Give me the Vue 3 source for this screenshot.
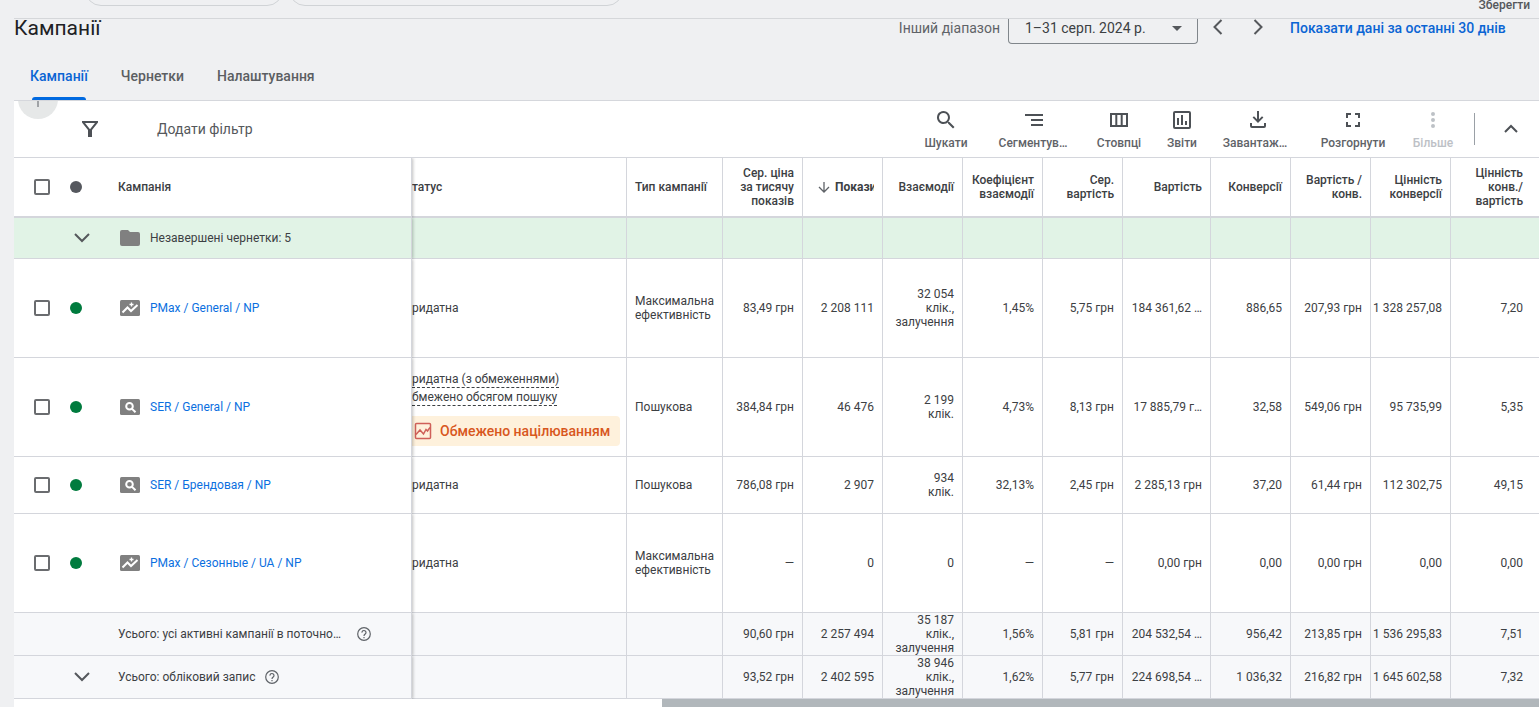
<template>
  <div class="page">
    <div class="strip">
      <button class="pill pill-small" aria-label="Перегляд"></button>
      <button class="pill pill-large" aria-label="Фільтри кампаній"></button>
      <button class="save">Зберегти</button>
    </div>

    <header class="head">
      <h1>Кампанії</h1>
      <span class="range-label">Інший діапазон</span>
      <button class="range">
        1–31 серп. 2024 р.
        <svg width="10" height="5" viewBox="0 0 10 5"><path d="M0 0h10L5 5z" fill="#55585c" /></svg>
      </button>
      <button class="step" aria-label="Назад">
        <svg width="10" height="16" viewBox="0 0 10 16"><path d="M8.500 1L1.500 8l7 7" /></svg>
      </button>
      <button class="step" aria-label="Вперед">
        <svg width="10" height="16" viewBox="0 0 10 16"><path d="M1.500 1l7 7-7 7" /></svg>
      </button>
      <a class="last-days" href="#">Показати дані за останні 30 днів</a>
    </header>

    <nav class="tabs">
      <a href="#" class="tab active">Кампанії</a>
      <a href="#" class="tab">Чернетки</a>
      <a href="#" class="tab">Налаштування</a>
    </nav>

    <main>
      <div class="toolbar">
        <button class="add" aria-label="Створити"></button>
        <svg class="funnel" width="18" height="18" viewBox="0 0 18 18">
          <path d="M1 1h16v1.500L11 10v7H7v-7L1 2.500zM4 3l5 6.200L14 3z" fill="#4d5156" fill-rule="evenodd" />
        </svg>
        <button class="add-filter">Додати фільтр</button>
        <div class="tools">
          <button v-for="tool in tools" :key="tool.name" class="tool" :class="tool.name" :disabled="tool.name === 'more'">
            <svg width="24" height="24" viewBox="0 0 24 24"><path :d="tool.icon" /></svg>
            <span>{{ tool.label }}</span>
          </button>
        </div>
        <button class="collapse" aria-label="Згорнути">
          <svg width="14" height="9" viewBox="0 0 14 9"><path d="M1 8l6-6 6 6" fill="none" stroke="#4d5156" stroke-width="2" /></svg>
        </button>
      </div>

      <table>
        <colgroup>
          <col />
          <col class="w-status" />
          <col class="w-type" />
          <col v-for="n in 5" :key="n" class="w-num" />
          <col class="w-wide" />
          <col v-for="n in 3" :key="'c' + n" class="w-num" />
          <col class="w-wide" />
        </colgroup>
        <thead>
          <tr>
            <th class="first">
              <div class="lead">
                <input type="checkbox" aria-label="Вибрати всі кампанії" />
                <i class="dot dark"></i>
                <span>Кампанія</span>
              </div>
            </th>
            <th class="status">татус</th>
            <th class="type">Тип кампанії</th>
            <th>{{ headings[0] }}</th>
            <th class="sorted">
              <div class="sort">
                <svg width="12" height="12" viewBox="0 0 12 12"><path d="M6 1v10M1 6l5 5 5-5" fill="none" stroke="#5f6368" stroke-width="1.300" /></svg>
                <span>Покази</span>
              </div>
            </th>
            <th v-for="heading in headings.slice(1)" :key="heading">{{ heading }}</th>
          </tr>
        </thead>
        <tbody>
          <tr class="drafts">
            <td class="first">
              <div class="lead">
                <i></i>
                <button class="chevron" aria-label="Розгорнути чернетки">
                  <svg width="16" height="10" viewBox="0 0 16 10"><path d="M1 1l7 7 7-7" /></svg>
                </button>
                <span class="name">
                  <svg width="20" height="16" viewBox="0 0 20 16"><path d="M2 0h6l2 2h8a2 2 0 0 1 2 2v10a2 2 0 0 1-2 2H2a2 2 0 0 1-2-2V2a2 2 0 0 1 2-2z" fill="#808080" /></svg>
                  Незавершені чернетки: 5
                </span>
              </div>
            </td>
            <td v-for="n in 12" :key="n"></td>
          </tr>
          <tr v-for="row in campaigns" :key="row.name" :class="row.size">
            <td class="first">
              <div class="lead">
                <input type="checkbox" :aria-label="row.name" />
                <i class="dot"></i>
                <span class="name">
                  <svg width="20" height="16" viewBox="0 0 20 16">
                    <rect width="20" height="16" rx="1.500" fill="#808080" />
                    <g v-if="row.pmax" fill="none" stroke="#fff">
                      <path d="M2.500 12.500L7.500 7.500l3.500 3.500 6.500-6" stroke-width="2" />
                      <path d="M11.500 2.500v4M9.500 4.500h4" stroke-width="1.300" />
                    </g>
                    <g v-else fill="none" stroke="#fff" stroke-width="2">
                      <circle cx="9.500" cy="7.300" r="3.300" />
                      <path d="M11.800 9.600l3.700 3.700" />
                    </g>
                  </svg>
                  <a href="#">{{ row.name }}</a>
                </span>
              </div>
            </td>
            <td class="status">
              <template v-if="row.limited">
                <div class="reason"><span>ридатна (з обмеженнями)</span></div>
                <div class="reason"><span>бмежено обсягом пошуку</span></div>
                <button class="badge">
                  <svg width="18" height="18" viewBox="0 0 18 18" fill="none" stroke="#cf6059" stroke-width="1.500">
                    <rect x="1.500" y="1.500" width="15" height="15" rx="1" />
                    <path d="M2 12.500l4-4.500 3.500 4 2.500-4.500 1.500 1.500L16 5.500" />
                  </svg>
                  Обмежено націлюванням
                </button>
              </template>
              <template v-else>ридатна</template>
            </td>
            <td class="type">{{ row.type }}</td>
            <td v-for="(value, i) in row.values" :key="i">{{ value }}</td>
          </tr>
          <tr v-for="row in totals" :key="row.name" class="total">
            <td class="first">
              <div class="lead">
                <i></i>
                <button v-if="row.expandable" class="chevron" aria-label="Розгорнути підсумки">
                  <svg width="16" height="10" viewBox="0 0 16 10"><path d="M1 1l7 7 7-7" /></svg>
                </button>
                <i v-else></i>
                <span class="total-name" :class="{ cut: !row.expandable }">
                  {{ row.name }}
                  <svg width="14" height="14" viewBox="0 0 14 14" fill="none" stroke="#5f6368" stroke-width="1.200">
                    <circle cx="7" cy="7" r="6.300" />
                    <path d="M5 5.600a2 2 0 1 1 3.200 1.500C7.400 7.700 7 8 7 8.900M7 9.900v1.300" />
                  </svg>
                </span>
              </div>
            </td>
            <td></td>
            <td></td>
            <td v-for="(value, i) in row.values" :key="i">{{ value }}</td>
          </tr>
        </tbody>
      </table>
      <div class="scroll"><div class="thumb"></div></div>
    </main>
  </div>
</template>

<script setup>
const tools = [
  { name: 'search', label: 'Шукати', icon: 'M15.500 14h-.8l-.3-.3a6.500 6.500 0 1 0-.7.7l.3.3v.8l5 5 1.500-1.500zm-6 0a4.500 4.500 0 1 1 0-9 4.500 4.500 0 0 1 0 9z' },
  { name: 'segment', label: 'Сегментув…', icon: 'M4 6h18v2H4zM10 11h12v2H10zM10 16h12v2H10z' },
  { name: 'columns', label: 'Стовпці', icon: 'M3 5v14h18V5zm2 2h3.300v10H5zm5.300 0h3.400v10h-3.400zm5.400 0H19v10h-3.300z' },
  { name: 'reports', label: 'Звіти', icon: 'M5 3a2 2 0 0 0-2 2v14a2 2 0 0 0 2 2h14a2 2 0 0 0 2-2V5a2 2 0 0 0-2-2zm0 2h14v14H5zM7 10h2v7H7zM11 7h2v10h-2zM15 13h2v4h-2z' },
  { name: 'download', label: 'Завантаж…', icon: 'M14 3h2v8.200l3-3 1.400 1.400L15 15 9.600 9.600 11 8.200l3 3zM7 15h2v3h12v-3h2v3a2 2 0 0 1-2 2H9a2 2 0 0 1-2-2z' },
  { name: 'expand', label: 'Розгорнути', icon: 'M5 5h5v2H7v3H5zM14 5h5v5h-2V7h-3zM5 14h2v3h3v2H5zM17 14h2v5h-5v-2h3z' },
  { name: 'more', label: 'Більше', icon: 'M12 4a2 2 0 1 0 0 4 2 2 0 0 0 0-4zm0 6a2 2 0 1 0 0 4 2 2 0 0 0 0-4zm0 6a2 2 0 1 0 0 4 2 2 0 0 0 0-4z' },
]

const headings = [
  'Сер. ціна\nза тисячу\nпоказів',
  'Взаємодії',
  'Коефіцієнт\nвзаємодії',
  'Сер.\nвартість',
  'Вартість',
  'Конверсії',
  'Вартість /\nконв.',
  'Цінність\nконверсії',
  'Цінність\nконв./\nвартість',
]

const campaigns = [
  {
    name: 'PMax / General / NP',
    pmax: true,
    size: 'tall',
    type: 'Максимальна\nефективність',
    values: ['83,49 грн', '2 208 111', '32 054\nклік.,\nзалучення', '1,45%', '5,75 грн', '184 361,62 …', '886,65', '207,93 грн', '1 328 257,08', '7,20'],
  },
  {
    name: 'SER / General / NP',
    limited: true,
    size: 'tall',
    type: 'Пошукова',
    values: ['384,84 грн', '46 476', '2 199\nклік.', '4,73%', '8,13 грн', '17 885,79 г…', '32,58', '549,06 грн', '95 735,99', '5,35'],
  },
  {
    name: 'SER / Брендовая / NP',
    size: 'short',
    type: 'Пошукова',
    values: ['786,08 грн', '2 907', '934\nклік.', '32,13%', '2,45 грн', '2 285,13 грн', '37,20', '61,44 грн', '112 302,75', '49,15'],
  },
  {
    name: 'PMax / Сезонные / UA / NP',
    pmax: true,
    size: 'tall',
    type: 'Максимальна\nефективність',
    values: ['—', '0', '0', '—', '—', '0,00 грн', '0,00', '0,00 грн', '0,00', '0,00'],
  },
]

const totals = [
  {
    name: 'Усього: усі активні кампанії в поточно…',
    values: ['90,60 грн', '2 257 494', '35 187\nклік.,\nзалучення', '1,56%', '5,81 грн', '204 532,54 …', '956,42', '213,85 грн', '1 536 295,83', '7,51'],
  },
  {
    name: 'Усього: обліковий запис',
    expandable: true,
    values: ['93,52 грн', '2 402 595', '38 946\nклік.,\nзалучення', '1,62%', '5,77 грн', '224 698,54 …', '1 036,32', '216,82 грн', '1 645 602,58', '7,32'],
  },
]
</script>

<style>
body {
  background: #eff0f2;
}
</style>

<style scoped>
.page {
  padding-left: 14px;
  font-family: Roboto, Arial, sans-serif;
  font-size: 12px;
  color: #3c4043;
  overflow: hidden;
}

button {
  padding: 0;
  border: 0;
  background: none;
  font: inherit;
  color: inherit;
}

a {
  color: #0b6fe0;
  text-decoration: none;
}

svg {
  flex: none;
  display: block;
}

.strip {
  display: flex;
  align-items: flex-end;
  gap: 6px;
  height: 18px;
  padding-left: 71px;
  border-bottom: 1px solid #d5d7da;
  overflow: hidden;
}

.pill {
  height: 32px;
  margin-bottom: 12px;
  border: 1px solid #d0d3d6;
  border-radius: 16px;
}

.pill-small {
  width: 198px;
}

.pill-large {
  width: 334px;
}

.save {
  margin: 0 9px 5px auto;
  line-height: 16px;
  font-weight: 500;
  color: #55585c;
}

.head {
  display: flex;
  height: 34px;
  padding-right: 28px;
  overflow: hidden;
  line-height: 18px;
  font-size: 14px;
}

h1 {
  margin: 0 auto 0 0;
  font-size: 21px;
  font-weight: 400;
  line-height: 18px;
  color: #202124;
}

.range-label {
  margin-right: 8px;
  color: #5f6368;
}

.range {
  display: flex;
  justify-content: space-between;
  width: 190px;
  height: 25px;
  padding: 0 15px 6px 16px;
  box-sizing: border-box;
  border: 1px solid #80868b;
  border-top: 0;
  border-radius: 0 0 4px 4px;
  align-items: center;
}

.step {
  display: flex;
  width: 40px;
  height: 16px;
  justify-content: center;
}

.step path,
.chevron path {
  fill: none;
  stroke: #55585c;
  stroke-width: 2;
}

.last-days {
  min-width: 221px;
  margin-left: 12px;
  font-weight: 500;
  color: #0b65d4;
}

.tabs {
  display: flex;
  gap: 1px;
  height: 47px;
  border-bottom: 1px solid #d5d7dc;
  font-size: 14px;
  font-weight: 500;
  line-height: 47px;
}

.tab {
  position: relative;
  padding: 0 16px;
  color: #5b5e62;
}

.tab.active {
  color: #0b65d4;
}

.tab.active::after {
  content: '';
  position: absolute;
  left: 18px;
  right: 18px;
  bottom: 0;
  height: 3px;
  border-radius: 3px 3px 0 0;
  background: #0069e0;
}

main {
  background: #fff;
}

.toolbar {
  position: relative;
  display: flex;
  align-items: center;
  height: 56px;
  padding-left: 67px;
  border-bottom: 1px solid #d4d6dc;
  overflow: hidden;
}

.add {
  position: absolute;
  left: 4px;
  top: -22px;
  width: 40px;
  height: 40px;
  border-radius: 50%;
  background: #e6e8e8;
}

.add::after {
  content: '';
  position: absolute;
  left: 19px;
  top: 14px;
  width: 2px;
  height: 14px;
  background: #a0a3a6;
}

.add-filter {
  margin: 0 auto 0 58px;
  font-size: 14px;
  color: #55585c;
}

.tools {
  display: flex;
}

.tool {
  display: flex;
  flex-direction: column;
  align-items: center;
  gap: 3px;
  font-weight: 500;
  line-height: 16px;
  color: #5f6368;
  white-space: nowrap;
}

.tool path {
  fill: #4d5156;
}

.tool.more {
  width: 66px;
  color: #bdc1c6;
}

.tool.more path {
  fill: #bdc1c6;
}

.search {
  width: 84px;
}

.segment {
  width: 90px;
}

.columns {
  width: 82px;
}

.reports {
  width: 44px;
}

.download {
  width: 102px;
}

.expand {
  width: 94px;
}

.collapse {
  display: flex;
  justify-content: center;
  align-items: center;
  width: 65px;
  height: 32px;
  margin-left: 8px;
  padding: 0 0 2px 8px;
  border-left: 1px solid #9aa0a6;
}

table {
  width: 100%;
  table-layout: fixed;
  border-collapse: separate;
  border-spacing: 0;
}

.w-status {
  width: 215px;
}

.w-type {
  width: 96px;
}

.w-num {
  width: 80px;
}

.w-wide {
  width: 88px;
}

th,
td {
  padding: 0 8px 0 0;
  border-right: 1px solid #d4d6dc;
  border-bottom: 1px solid #d4d6dc;
  line-height: 14px;
  text-align: right;
  vertical-align: middle;
  white-space: pre-line;
}

th {
  height: 58px;
  border-bottom-width: 2px;
  font-weight: 500;
}

th:last-child,
td:last-child {
  padding-right: 16px;
  border-right: 0;
}

.first {
  position: relative;
  padding: 0;
  box-shadow: 1px 0 3px rgba(0, 0, 0, 0.25);
  clip-path: inset(0 -5px 0 0);
  text-align: left;
}

.status {
  padding: 0;
  text-align: left;
}

.type {
  padding: 0 0 0 8px;
  text-align: left;
}

.sort {
  display: flex;
  align-items: center;
  gap: 5px;
  padding-left: 15px;
  overflow: hidden;
}

.sort span {
  font-weight: 700;
}

.lead {
  display: grid;
  grid-template-columns: 36px 48px 1fr;
  align-items: center;
  padding-left: 20px;
  white-space: nowrap;
}

input[type='checkbox'] {
  appearance: none;
  width: 16px;
  height: 16px;
  margin: 0;
  border: 2px solid #6a6c6f;
  border-radius: 2px;
  background: #fff;
}

.dot {
  width: 12px;
  height: 12px;
  border-radius: 50%;
  background: #007b3e;
}

.dot.dark {
  background: #55585e;
}

.chevron {
  margin-left: 4px;
}

.name {
  display: flex;
  align-items: center;
  gap: 10px;
  padding-left: 2px;
}

.drafts td {
  height: 40px;
  background: #e1f3e6;
}

.tall td {
  height: 98px;
}

.short td {
  height: 56px;
}

.reason {
  line-height: 18px;
}

.reason:first-child {
  margin-top: 2px;
}

.reason span {
  padding-bottom: 1px;
  border-bottom: 1px dashed #3c4043;
}

.badge {
  display: flex;
  align-items: center;
  gap: 8px;
  height: 30px;
  margin-top: 10px;
  padding: 0 10px 0 2px;
  border-radius: 0 4px 4px 0;
  background: #fef1dc;
  font-size: 14px;
  font-weight: 500;
  color: #d8571d;
}

.total td {
  height: 42px;
  background: #f7f8fa;
}

.total-name {
  display: flex;
  align-items: center;
  gap: 10px;
}

.total-name.cut {
  gap: 16px;
}

.scroll {
  height: 8px;
}

.thumb {
  height: 8px;
  margin-left: 648px;
  background: #b1b7bb;
}
</style>
